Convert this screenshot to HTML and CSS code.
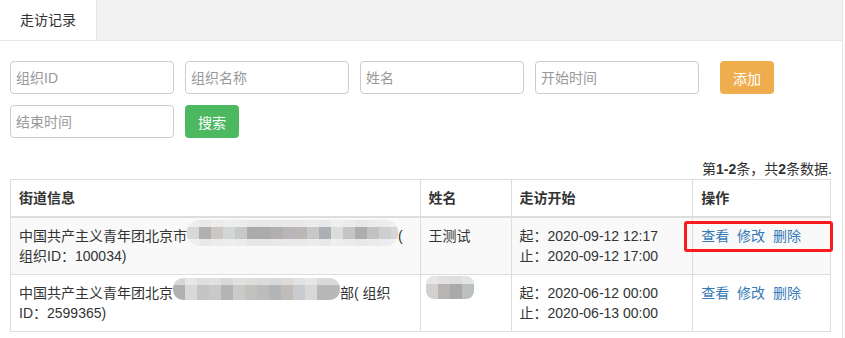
FILE: index.html
```html
<!DOCTYPE html>
<html lang="zh-CN">
<head>
    <meta charset="UTF-8">
    <meta name="viewport" content="width=device-width, initial-scale=1.0">
    <title>走访记录</title>
    <link rel="stylesheet" href="styles.css">
</head>
<body>
    <div class="page">
        <div class="tabs">
            <div class="tab active">走访记录</div>
        </div>

        <div class="content">
            <form class="search-form">
                <input type="text" class="form-input" placeholder="组织ID">
                <input type="text" class="form-input" placeholder="组织名称">
                <input type="text" class="form-input" placeholder="姓名">
                <input type="text" class="form-input" placeholder="开始时间">
                <button type="button" class="btn btn-warning btn-add">添加</button>
                <input type="text" class="form-input" placeholder="结束时间">
                <button type="button" class="btn btn-success">搜索</button>
            </form>

            <div class="summary">第<b>1-2</b>条，共<b>2</b>条数据.</div>

            <table class="grid">
                <colgroup>
                    <col class="col-info">
                    <col class="col-name">
                    <col class="col-time">
                    <col class="col-action">
                </colgroup>
                <thead>
                    <tr>
                        <th>街道信息</th>
                        <th>姓名</th>
                        <th>走访开始</th>
                        <th>操作</th>
                    </tr>
                </thead>
                <tbody>
                    <tr class="striped">
                        <td>中国共产主义青年团北京市<span class="blur blur-org1"></span>( 组织ID：100034)</td>
                        <td>王测试</td>
                        <td>起：2020-09-12 12:17<br>止：2020-09-12 17:00</td>
                        <td class="actions">
                            <a href="#">查看</a> <a href="#">修改</a> <a href="#">删除</a>
                            <div class="highlight"></div>
                        </td>
                    </tr>
                    <tr>
                        <td>中国共产主义青年团北京<span class="blur blur-org2"></span>部( 组织ID：2599365)</td>
                        <td><span class="blur blur-name"></span></td>
                        <td>起：2020-06-12 00:00<br>止：2020-06-13 00:00</td>
                        <td class="actions">
                            <a href="#">查看</a> <a href="#">修改</a> <a href="#">删除</a>
                        </td>
                    </tr>
                </tbody>
            </table>
        </div>
    </div>
</body>
</html>
```

FILE: styles.css
```css
body {
    margin: 0;
    font-family: "Liberation Sans", "Noto Sans CJK SC", sans-serif;
    font-size: 14px;
    line-height: 20px;
    color: #333;
    background: #fff;
}
.page {
    width: 843px;
    min-height: 338px;
    box-sizing: border-box;
    border-right: 1px solid #e6e6e6;
}
.tabs {
    display: flex;
    height: 40px;
    background-color: #f2f2f2;
    border-bottom: 1px solid #e6e6e6;
}
.tab {
    width: 96px;
    line-height: 40px;
    text-align: center;
    color: #333;
}
.tab.active {
    background-color: #fff;
    border-right: 1px solid #e6e6e6;
}
.content {
    padding: 20px 10px 0 10px;
}
.search-form {
    display: flex;
    flex-wrap: wrap;
    gap: 11px;
    margin: 0;
}
.form-input {
    width: 164px;
    height: 33px;
    box-sizing: border-box;
    padding: 0 5px;
    border: 1px solid #ccc;
    border-radius: 4px;
    font-family: inherit;
    font-size: 14px;
    color: #555;
}
.form-input::placeholder {
    color: #999;
}
.btn {
    width: 54px;
    height: 33px;
    border: none;
    border-radius: 4px;
    color: #fff;
    font-family: inherit;
    font-size: 14px;
    cursor: pointer;
}
.btn-warning {
    background-color: #f0ad4e;
}
.btn-success {
    background-color: #4cb860;
}
.btn-add {
    margin-left: 10px;
}
.summary {
    margin-top: 21px;
    text-align: right;
}
.grid {
    width: 821px;
    border-collapse: collapse;
    border: 1px solid #ddd;
}
.col-info { width: 410px; }
.col-name { width: 91px; }
.col-time { width: 182px; }
.col-action { width: 138px; }
.grid th,
.grid td {
    padding: 8px;
    border: 1px solid #ddd;
    text-align: left;
    vertical-align: top;
}
.grid th {
    font-weight: bold;
    border-bottom: 2px solid #ddd;
}
.grid .striped {
    background-color: #f9f9f9;
}
.actions {
    position: relative;
}
.actions a {
    color: #337ab7;
    text-decoration: none;
    margin-right: 4px;
}
.highlight {
    position: absolute;
    left: -9px;
    top: 3px;
    width: 149px;
    height: 31px;
    box-sizing: border-box;
    border: 3px solid #fe1a1a;
    border-radius: 3px;
}

/* mosaic used to hide private data */
.blur {
    display: inline-block;
    position: relative;
    height: 20px;
    vertical-align: top;
}
.blur::before {
    content: "";
    position: absolute;
    left: 0;
    right: 0;
    border-radius: 12px;
    background:
        linear-gradient(180deg, rgba(242,242,242,0.85) 0 28%, rgba(242,242,242,0) 28% 72%, rgba(242,242,242,0.85) 72%),
        linear-gradient(90deg,
            #d8d8d8 0 12px, #b0b0b0 12px 24px, #cbc8c4 24px 36px, #d2d6d6 36px 48px,
            #c8c8c6 48px 60px, #aaaaaa 60px 72px, #acaaaa 72px 84px, #b1afaf 84px 96px,
            #b8b6ba 96px 108px, #bcb6b6 108px 120px, #c8c8ca 120px 132px, #acb0b4 132px 144px,
            #dcdcd8 144px 156px, #c4c4c4 156px 168px, #adadad 168px 180px, #c2c2c2 180px 192px,
            #cfcfcf 192px 204px, #d6d6d6 204px);
}
.blur-org1 {
    width: 211px;
}
.blur-org1::before {
    top: -6px;
    bottom: 0;
}
.blur-org2 {
    width: 167px;
}
.blur-org2::before {
    top: -5px;
    bottom: 3px;
    border-radius: 10px;
    background:
        linear-gradient(180deg, rgba(240,240,240,0.6) 0 30%, rgba(240,240,240,0) 30% 100%),
        linear-gradient(90deg,
            #b0b0b0 0 12px, #d8d8d8 12px 24px, #c6c4c2 24px 36px, #c9c9c9 36px 48px,
            #b4b4b4 48px 60px, #cacaca 60px 72px, #c3c1bd 72px 84px, #bcbcbc 84px 96px,
            #b2b4b6 96px 108px, #c0bcb8 108px 120px, #c8ccd0 120px 132px, #d8d8d8 132px 144px,
            #b8b8b8 144px);
}
.blur-name {
    width: 48px;
    margin-left: -3px;
}
.blur-name::before {
    top: -7px;
    bottom: 4px;
    border-radius: 8px;
    background:
        linear-gradient(180deg, rgba(235,235,235,0.8) 0 35%, rgba(235,235,235,0) 35% 100%),
        linear-gradient(90deg, #d4d0d0 0 12px, #b8b4b4 12px 24px, #aaa8a8 24px 36px, #bcc0c0 36px);
}
```
